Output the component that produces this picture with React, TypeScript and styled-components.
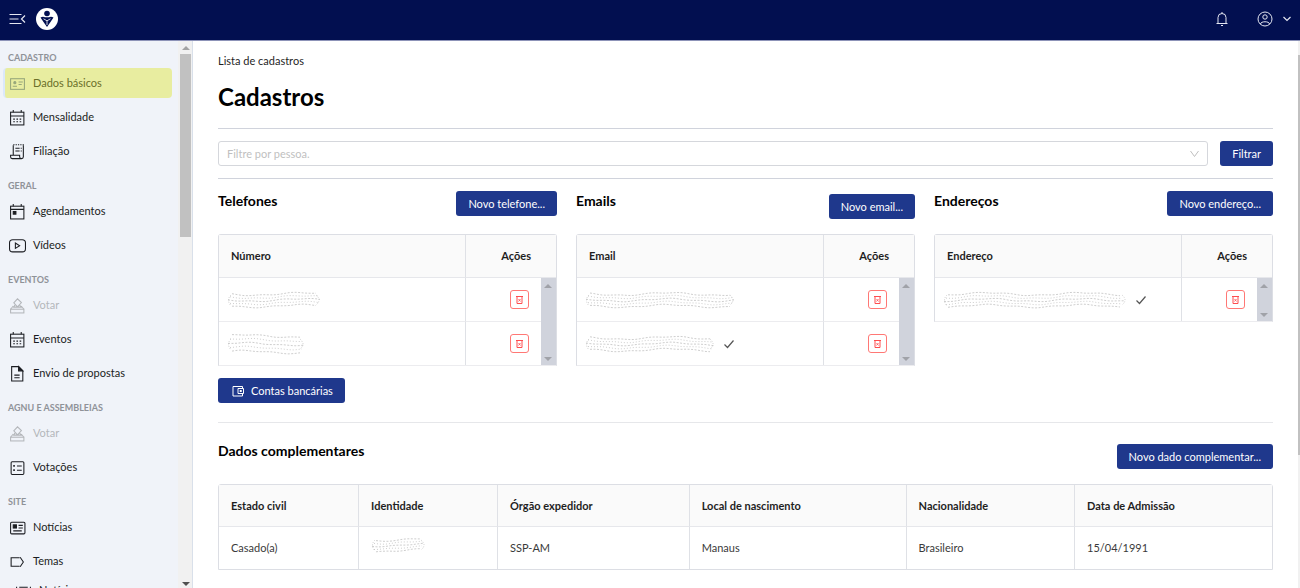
import React from "react";
import styled, { createGlobalStyle, css } from "styled-components";

const GlobalStyle = createGlobalStyle`
  * { box-sizing: border-box; }
  body { margin: 0; background: #fff; color: #1f1f1f; font: 11px/20px Lato, "Liberation Sans", sans-serif; overflow: hidden; }
  button, select { font: inherit; }
  h1, h2, p, ul { margin: 0; padding: 0; }
`;

const Shell = styled.div`
  height: 100vh;
  display: flex;
  flex-direction: column;
`;

const TopBar = styled.header`
  flex: none;
  height: 41px;
  padding: 0 8px 2px;
  display: flex;
  align-items: center;
  background: #020f50;
  border-bottom: 1px solid #8d93b8;
  color: #fff;
`;

const BarButton = styled.button<{ $gap?: number }>`
  display: flex;
  align-items: center;
  gap: 9px;
  padding: 0;
  margin-left: ${(p) => p.$gap ?? 0}px;
  border: 0;
  background: none;
  color: #e4e6f0;
  line-height: 0;
`;

const Logo = styled.a`
  margin: 0 auto 0 10px;
  line-height: 0;
`;

const Body = styled.div`
  flex: 1;
  min-height: 0;
  display: flex;
`;

const Sidebar = styled.aside`
  flex: none;
  width: 193px;
  display: flex;
  background: #f0f3f9;
  border-right: 1px solid #d9e0ea;
`;

const Nav = styled.nav`
  flex: 1;
  overflow: hidden;
  padding: 7px 6px 0 3px;
  display: flex;
  flex-direction: column;
  gap: 10px;
`;

const GroupTitle = styled.p`
  padding-left: 5px;
  font-size: 9px;
  font-weight: 700;
  color: #8f9298;
`;

const Items = styled.ul`
  list-style: none;
  display: flex;
  flex-direction: column;
  gap: 4px;
`;

const Item = styled.a<{ $active?: boolean; $disabled?: boolean; $nested?: boolean }>`
  height: 30px;
  padding: 0 6px;
  display: flex;
  align-items: center;
  gap: 7px;
  border-radius: 4px;
  color: #1b1d22;
  text-decoration: none;
  white-space: nowrap;
  ${(p) => p.$active && css`
    background: #e8eda0;
    border-left: 2px solid #dbe8fb;
    padding-left: 4px;
    color: #6b7029;
    svg { color: #96a67a; }
  `}
  ${(p) => p.$disabled && css`color: #b4b7bb;`}
  ${(p) => p.$nested && css`height: 20px; padding-left: 12px;`}
`;

const Rail = styled.div`
  flex: none;
  width: 14px;
  background: #f1f1f1;
  color: #a3a3a3;
  display: flex;
  flex-direction: column;
  align-items: center;
  justify-content: space-between;
  padding: 5px 1px 2px 2px;
`;

const Thumb = styled.div`
  width: 100%;
  height: 183px;
  margin: 4px 0 auto;
  background: #c1c1c1;
`;

const Arrow = styled.span<{ $down?: boolean; $dark?: boolean }>`
  border: 4px solid transparent;
  ${(p) => (p.$down ? "border-top-color: currentColor; border-bottom: 0;" : "border-bottom-color: currentColor; border-top: 0;")}
  ${(p) => p.$dark && "color: #505050;"}
`;

const Main = styled.main`
  flex: 1;
  min-width: 0;
  overflow: hidden;
  padding: 10px 25px 0;
`;

const PageRail = styled.div`
  flex: none;
  width: 2px;
  padding-top: 14px;
  background: #f1f1f1;
  &::before { content: ""; display: block; height: 75%; background: #c1c1c1; }
`;

const Title = styled.h1`
  margin: 9px 0 14px;
  font-size: 24px;
  line-height: 34px;
  font-weight: 700;
  color: #000;
`;

const FilterBar = styled.form`
  display: flex;
  gap: 12px;
  padding: 12px 0;
  border-top: 1px solid #d0d3dc;
  border-bottom: 1px solid #d0d3dc;
`;

const SelectBox = styled.label`
  flex: 1;
  height: 25px;
  display: flex;
  align-items: center;
  padding-right: 8px;
  border: 1px solid #d5d7dc;
  border-radius: 3px;
  color: #bfbfbf;
`;

const Select = styled.select`
  flex: 1;
  appearance: none;
  border: 0;
  outline: 0;
  padding: 0 8px;
  background: none;
  color: #bfbfbf;
`;

const Button = styled.button`
  flex: none;
  height: 25px;
  padding: 0 12px;
  display: inline-flex;
  align-items: center;
  gap: 7px;
  border: 0;
  border-radius: 3px;
  background: #1f388c;
  color: #fff;
  white-space: nowrap;
`;

const WalletButton = styled(Button)`
  padding-left: 14px;
`;

const Cards = styled.div`
  display: grid;
  grid-template-columns: repeat(3, minmax(0, 1fr));
  gap: 19px;
  align-items: start;
  margin: 12px 0;
`;

const SectionHead = styled.div<{ $low?: boolean }>`
  height: 43px;
  display: flex;
  justify-content: space-between;
  align-items: flex-start;
  ${Button} { margin-top: ${(p) => (p.$low ? 3 : 0)}px; }
`;

const Heading = styled.h2`
  font-size: 14px;
  line-height: 20px;
  font-weight: 700;
  color: #000;
`;

const Table = styled.table`
  width: 100%;
  table-layout: fixed;
  border-collapse: separate;
  border-spacing: 0;
  border: 1px solid #dcdee4;
  border-radius: 3px 3px 0 0;
  th, td { padding: 0 12px; text-align: left; border-right: 1px solid #dfe1e6; }
  th { height: 42px; background: #fafafa; font-weight: 700; border-bottom: 1px solid #e6e7eb; }
  td { height: 42px; color: #3a3a3a; border-bottom: 1px solid #ececef; }
  tr > :last-child { border-right: 0; }
  tbody tr:last-child td { border-bottom: 0; }
`;

const ContactTable = styled(Table)`
  border-bottom-color: #ececef;
  th { height: 43px; }
  th:last-child { text-align: right; padding-right: 25px; }
  td { height: 44px; }
  td:first-child { padding-left: 8px; }
  td:nth-child(2) { border-right: 0; }
  tbody tr:last-child td { height: 43px; }
  && td.rail { padding: 0; height: 1px; background: #d0d3dc; border-bottom: 0; }
`;

const RailTrack = styled.div`
  height: 100%;
  padding: 6px 0 4px;
  display: flex;
  flex-direction: column;
  align-items: center;
  justify-content: space-between;
  color: #a0a2a8;
`;

const ActionCell = styled.div`
  display: flex;
  justify-content: flex-end;
`;

const CellLine = styled.div`
  display: flex;
  align-items: center;
  gap: 8px;
`;

const IconButton = styled.button`
  width: 19px;
  height: 19px;
  padding: 0;
  display: grid;
  place-items: center;
  border: 1px solid #ff7875;
  border-radius: 3px;
  background: #fff;
  color: #ff4d4f;
`;

const Divider = styled.hr`
  margin: 19px 0 18px;
  border: 0;
  border-top: 1px solid #e6e7ea;
`;

const iconPaths: Record<string, React.ReactNode> = {
  id: <><rect x="1.5" y="3.5" width="13" height="10" /><circle cx="5.5" cy="7.2" r="1" fill="currentColor" /><path d="M3.5 10.5h4M9 6.5h4M9 9h3" /></>,
  calendar: <><rect x="1.5" y="3" width="12.5" height="12" /><path d="M1.5 6.5h12.5M4 1v2M11.5 1v2" /><path d="M4 9.5h8M4 12h8" strokeDasharray="1.5 1.5" /></>,
  receipt: <><path d="M4 12V2M13.500 2v11a1.700 1.700 0 0 1-1.700 1.700H3A1.700 1.700 0 0 1 1.500 13v-1.500H10V13a1.700 1.700 0 0 0 1.700 1.700M6 5h4M6 7.500h4M11 5h1M11 7.500h1" /><path d="M4 1.700h10" strokeDasharray="1.200 1" /></>,
  agenda: <><rect x="1.5" y="3" width="12.5" height="12" /><path d="M1.5 6h12.500M4 1v2M11.500 1v2" /><rect x="4" y="8" width="2.500" height="2.500" fill="currentColor" /></>,
  video: <><rect x=".5" y="2.500" width="15" height="11.500" rx="3" /><path d="M6 5.700v5l4-2.500z" /></>,
  vote: <><rect x="1.500" y="11.500" width="12.500" height="3.500" /><path d="M1.500 11.500 4 8.500M14 11.500 11.500 8.500M4.500 5.500 8 1.700l3.700 3.500L8 9.300zM5.500 7.500 4.500 9.500h7L10 7.500" /></>,
  doc: <><path d="M2.500 1.500H9l4 4V15H2.500zM5 9.500h5M5 12h5" /><path d="M9 1.500v4h4z" fill="currentColor" /></>,
  ballot: <><rect x="2" y="2.500" width="12" height="12" rx="1" /><path d="M7.500 6.500H12M7.500 10.500H12" /><path d="M4 6.500h1.500M4 10.500h1.500" strokeWidth="1.800" /></>,
  news: <><rect x="1.500" y="3" width="13.500" height="11" rx="1" /><rect x="4" y="5.500" width="3" height="3" fill="currentColor" /><path d="M9 6h4M9 8.500h4M4 11.200h8" /></>,
  tag: <path d="M10 4.500H2v8h8M10.500 4l3 4.500-3 4.500" />,
  list: <path d="M1.500 14V4.500M4 5h8M4 8h8M14.500 14V4.500" />,
};

function NavIcon({ name }: { name: string }) {
  return (
    <svg width="17" height="17" viewBox="0 0 16 16" fill="none" stroke="currentColor" strokeWidth="1" aria-hidden="true">
      {iconPaths[name]}
    </svg>
  );
}

type Entry = { icon: string; label: string; active?: boolean; disabled?: boolean; nested?: boolean };
const groups: { title: string; items: Entry[] }[] = [
  { title: "CADASTRO", items: [{ icon: "id", label: "Dados básicos", active: true }, { icon: "calendar", label: "Mensalidade" }, { icon: "receipt", label: "Filiação" }] },
  { title: "GERAL", items: [{ icon: "agenda", label: "Agendamentos" }, { icon: "video", label: "Vídeos" }] },
  { title: "EVENTOS", items: [{ icon: "vote", label: "Votar", disabled: true }, { icon: "calendar", label: "Eventos" }, { icon: "doc", label: "Envio de propostas" }] },
  { title: "AGNU E ASSEMBLEIAS", items: [{ icon: "vote", label: "Votar", disabled: true }, { icon: "ballot", label: "Votações" }] },
  { title: "SITE", items: [{ icon: "news", label: "Notícias" }, { icon: "tag", label: "Temas" }, { icon: "list", label: "Notícias", nested: true }] },
];

/* Dotted pencil strokes that hide personal values. */
function Scribble({ width, height = 18, seed }: { width: number; height?: number; seed: number }) {
  const mid = height / 2;
  const lines = [-2, -1, 0, 1, 2].map((n) => {
    const inset = Math.abs(n) * 2 + 1;
    let d = "";
    for (let x = inset; x <= width - inset; x += 4) {
      const y = mid + n * (height / 6) + Math.sin(x / 15 + seed) * 1.4 + Math.sin(x / 5 + n) * 0.5;
      d += `${d ? "L" : "M"}${x} ${y.toFixed(1)}`;
    }
    return d;
  });
  return (
    <svg width={width} height={height} fill="none" stroke="#c2c2c2" strokeWidth="0.8" role="img" aria-label="Oculto">
      {lines.map((d, i) => <path key={i} d={d} strokeDasharray={i % 2 ? "1 2" : "2 1.5"} />)}
      <path d={`M4 ${mid - 5}Q-1 ${mid} 4 ${mid + 6}M${width - 5} ${mid - 5}q6 5 0 10`} strokeDasharray="1 1.5" />
    </svg>
  );
}

function Check() {
  return (
    <svg width="12" height="12" viewBox="0 0 12 12" fill="none" stroke="#555" strokeWidth="1.2" aria-hidden="true">
      <path d="M1.5 6.5 4.5 9.5 10.5 2.5" />
    </svg>
  );
}

type Row = { width: number; height?: number; check?: boolean };
function ContactCard({ title, column, action, rows, low }: { title: string; column: string; action: string; rows: Row[]; low?: boolean }) {
  return (
    <section>
      <SectionHead $low={low}>
        <Heading>{title}</Heading>
        <Button type="button">{action}</Button>
      </SectionHead>
      <ContactTable>
        <colgroup><col /><col width="75" /><col width="15" /></colgroup>
        <thead><tr><th>{column}</th><th colSpan={2}>Ações</th></tr></thead>
        <tbody>
          {rows.map((r, i) => (
            <tr key={i}>
              <td><CellLine><Scribble {...r} seed={i + r.width} />{r.check && <Check />}</CellLine></td>
              <td>
                <ActionCell>
                  <IconButton type="button" aria-label="Excluir">
                    <svg width="7" height="8" viewBox="0 0 7 8" fill="none" stroke="currentColor"><path d="M0 .5h7M1 1v6.500h5V1" /><path d="M2.500 3l2 2.500M4.500 3l-2 2.500" strokeWidth=".8" /></svg>
                  </IconButton>
                </ActionCell>
              </td>
              {i === 0 && <td className="rail" rowSpan={rows.length} aria-hidden="true"><RailTrack><Arrow /><Arrow $down /></RailTrack></td>}
            </tr>
          ))}
        </tbody>
      </ContactTable>
    </section>
  );
}

const details: { label: string; value: React.ReactNode; width: string }[] = [
  { label: "Estado civil", value: "Casado(a)", width: "13.3%" },
  { label: "Identidade", value: <Scribble width={55} height={16} seed={1} />, width: "13.2%" },
  { label: "Órgão expedidor", value: "SSP-AM", width: "18.2%" },
  { label: "Local de nascimento", value: "Manaus", width: "20.6%" },
  { label: "Nacionalidade", value: "Brasileiro", width: "16%" },
  { label: "Data de Admissão", value: "15/04/1991", width: "18.7%" },
];

export default function App() {
  return (
    <Shell>
      <GlobalStyle />
      <TopBar>
        <BarButton type="button" aria-label="Recolher menu">
          <svg width="18" height="14" viewBox="0 0 18 14" fill="none" stroke="currentColor" strokeWidth="1.2"><path d="M1.500 2.500h12M1.500 7h9M1.500 11.500h12M17 3.500 13.500 7l3.500 3.500" /></svg>
        </BarButton>
        <Logo href="#" aria-label="Início">
          <svg width="22" height="22" viewBox="0 0 22 22"><circle cx="11" cy="11" r="11" fill="#fff" /><circle cx="11" cy="5.500" r="2.800" fill="#020f50" /><path d="M4.500 9.500Q7 8 9 9.300h4Q15 8 17.500 9.500L14.500 14 11 19l-3.500-5z" fill="#020f50" /><path d="M11 12.500v4.500M7.500 10.800 11 12.800l3.500-2" stroke="#fff" strokeWidth=".8" fill="none" /></svg>
        </Logo>
        <BarButton type="button" aria-label="Notificações">
          <svg width="14" height="16" viewBox="0 0 14 16" fill="none" stroke="currentColor"><path d="M3 12.500V6.500a4 4 0 0 1 8 0v6M1.500 12.500h11M7 1v1.500M6 14.500h2" /></svg>
        </BarButton>
        <BarButton type="button" $gap={28} aria-label="Conta">
          <svg width="16" height="16" viewBox="0 0 16 16" fill="none" stroke="currentColor"><circle cx="8" cy="8" r="7" /><circle cx="8" cy="6" r="2.200" /><path d="M3.500 13c0-3 9-3 9 0" /></svg>
          <svg width="10" height="8" viewBox="0 0 10 8" fill="none" stroke="currentColor" strokeWidth="1.200"><path d="M1.500 2 5 5.500 8.500 2" /></svg>
        </BarButton>
      </TopBar>
      <Body>
        <Sidebar>
          <Nav>
            {groups.map((g) => (
              <div key={g.title}>
                <GroupTitle>{g.title}</GroupTitle>
                <Items>
                  {g.items.map((it) => (
                    <li key={it.icon}><Item href="#" $active={it.active} $disabled={it.disabled} $nested={it.nested}><NavIcon name={it.icon} />{it.label}</Item></li>
                  ))}
                </Items>
              </div>
            ))}
          </Nav>
          <Rail aria-hidden="true"><Arrow /><Thumb /><Arrow $down $dark /></Rail>
        </Sidebar>
        <Main>
          <p>Lista de cadastros</p>
          <Title>Cadastros</Title>
          <FilterBar>
            <SelectBox>
              <Select aria-label="Pessoa"><option>Filtre por pessoa.</option></Select>
              <svg width="9" height="8" viewBox="0 0 9 8" fill="none" stroke="currentColor"><path d="M.5 1 4.500 6.500 8.500 1" /></svg>
            </SelectBox>
            <Button type="button">Filtrar</Button>
          </FilterBar>
          <Cards>
            <ContactCard title="Telefones" column="Número" action="Novo telefone..." rows={[{ width: 94 }, { width: 78, height: 24 }]} />
            <ContactCard title="Emails" column="Email" action="Novo email..." low rows={[{ width: 150 }, { width: 130, check: true }]} />
            <ContactCard title="Endereços" column="Endereço" action="Novo endereço..." rows={[{ width: 184, check: true }]} />
          </Cards>
          <WalletButton type="button">
            <svg width="12" height="12" viewBox="0 0 12 12" fill="none" stroke="currentColor"><path d="M10.500 3.500v-2H1v9.500h9.500V9M11.500 3.500H6v5h5.500zM8 5.500h1.500v1H8z" /></svg>
            Contas bancárias
          </WalletButton>
          <Divider />
          <SectionHead $low>
            <Heading>Dados complementares</Heading>
            <Button type="button">Novo dado complementar...</Button>
          </SectionHead>
          <Table>
            <colgroup>{details.map((d) => <col key={d.label} width={d.width} />)}</colgroup>
            <thead><tr>{details.map((d) => <th key={d.label}>{d.label}</th>)}</tr></thead>
            <tbody><tr>{details.map((d) => <td key={d.label}>{d.value}</td>)}</tr></tbody>
          </Table>
        </Main>
        <PageRail />
      </Body>
    </Shell>
  );
}
